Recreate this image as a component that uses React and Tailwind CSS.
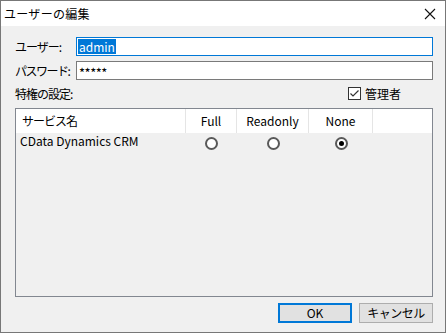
import React from 'react';

const font = { fontFamily: '"Noto Sans CJK JP", "Noto Sans", sans-serif' };

function Radio({ checked }) {
    return (
        <span className="w-[13px] h-[13px] rounded-full border-[2px] border-[#595959] bg-white flex items-center justify-center">
            {checked && <span className="w-[5px] h-[5px] rounded-full bg-black" />}
        </span>
    );
}

export default function App() {
    return (
        <div className="w-[446px] h-[333px] flex flex-col bg-[#f0f0f0] border border-[#777777] text-[12px] leading-none text-black" style={font}>
            {/* Title bar */}
            <div className="h-[25px] bg-white flex items-center justify-between pl-[3px] pr-[9px]">
                <span className="text-[12px] tracking-[0.3px]">ユーザーの編集</span>
                <svg width="12" height="12" viewBox="0 0 12 12">
                    <path d="M1 1 L11 11 M11 1 L1 11" stroke="#111" strokeWidth="1.1" />
                </svg>
            </div>

            <div className="flex-1 flex flex-col pl-[14px] pr-[12px]">
                {/* User */}
                <div className="mt-[11px] flex items-center h-[19px]">
                    <span className="w-[61px] shrink-0 whitespace-nowrap tracking-[-1px]">ユーザー:</span>
                    <div className="flex-1 h-[19px] border border-[#0078d7] bg-white flex items-center pl-[1px]">
                        <span className="bg-[#0078d7] text-white px-[1px] h-[15px] flex items-center">admin</span>
                    </div>
                </div>

                {/* Password */}
                <div className="mt-[5px] flex items-center h-[19px]">
                    <span className="w-[61px] shrink-0 whitespace-nowrap tracking-[-1.5px]">パスワード:</span>
                    <div className="flex-1 h-[19px] border border-[#7a7a7a] bg-white flex items-center pl-[2px]">
                        <span className="text-[13px] tracking-[-0.5px] pt-[3px]">*****</span>
                    </div>
                </div>

                {/* Privileges */}
                <div className="mt-[6px] h-[15px] flex items-center justify-between">
                    <span className="tracking-[-1px]">特権の設定:</span>
                    <div className="flex items-center gap-[4px] pr-[32px]">
                        <span className="w-[13px] h-[13px] border border-[#333333] bg-white flex items-center justify-center">
                            <svg width="11" height="11" viewBox="0 0 11 11">
                                <path d="M1.5 5.5 L4 8 L9.5 2.5" stroke="#333" strokeWidth="1.2" fill="none" />
                            </svg>
                        </span>
                        <span>管理者</span>
                    </div>
                </div>

                {/* List */}
                <div className="mt-[7px] h-[189px] border border-[#828790] bg-[#f0f0f0] flex flex-col">
                    <div className="h-[24px] bg-white flex">
                        <div className="w-[170px] border-r border-[#e5e5e5] flex items-center pl-[6px] tracking-[-1px]">サービス名</div>
                        <div className="w-[51px] border-r border-[#e5e5e5] flex items-center justify-center">Full</div>
                        <div className="w-[72px] border-r border-[#e5e5e5] flex items-center justify-center">Readonly</div>
                        <div className="w-[64px] border-r border-[#e5e5e5] flex items-center justify-center">None</div>
                        <div className="flex-1" />
                    </div>
                    <div className="h-[18px] flex items-center">
                        <div className="w-[170px] pl-[4px] self-start pt-[2px]">CData Dynamics CRM</div>
                        <div className="w-[51px] flex justify-center pt-[2px]"><Radio /></div>
                        <div className="w-[72px] flex justify-center pt-[2px]"><Radio /></div>
                        <div className="w-[64px] flex justify-center pt-[2px]"><Radio checked /></div>
                    </div>
                </div>

                {/* Buttons */}
                <div className="mt-[6px] flex justify-end gap-[7px]">
                    <button className="w-[74px] h-[20px] border-[2px] border-[#0078d7] bg-[#e1e1e1] flex items-center justify-center">OK</button>
                    <button className="w-[74px] h-[20px] border border-[#adadad] bg-[#e1e1e1] flex items-center justify-center tracking-[-0.5px]">キャンセル</button>
                </div>
            </div>
        </div>
    );
}
